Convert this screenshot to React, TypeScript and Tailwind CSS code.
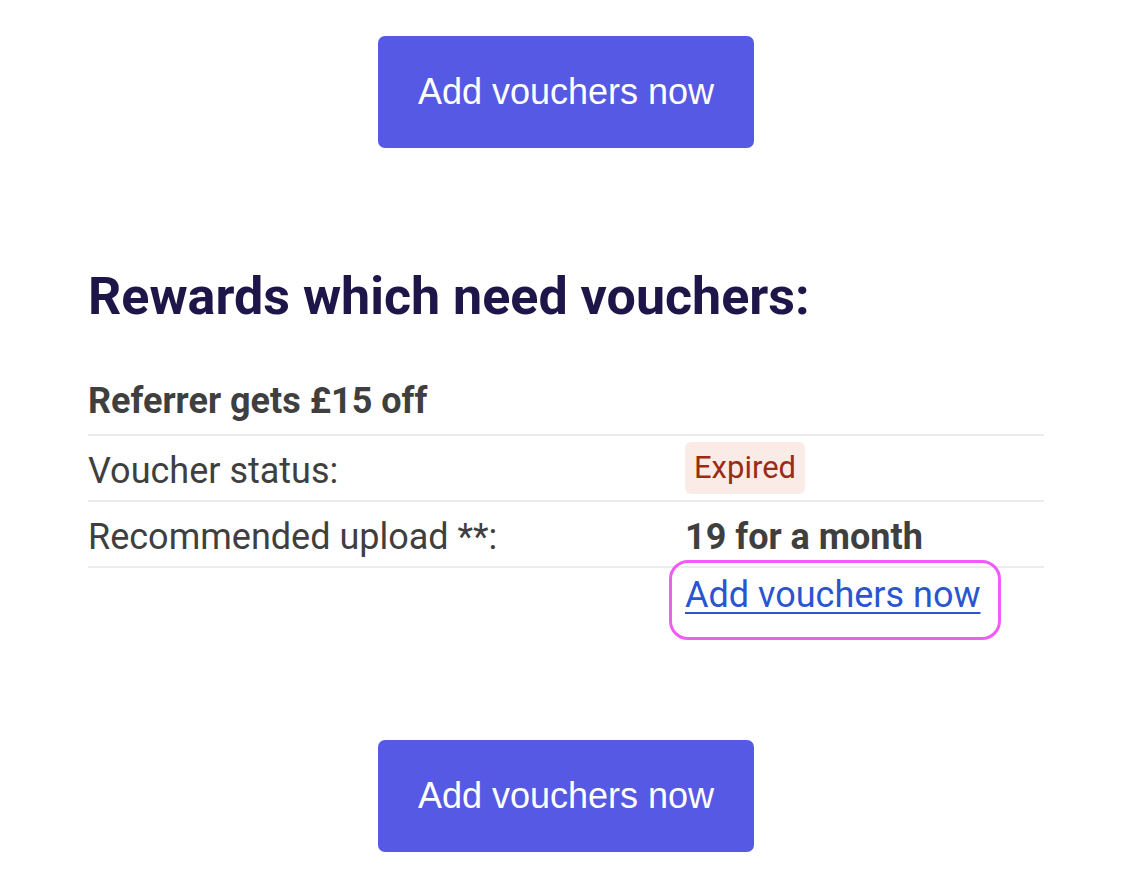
function VoucherButton() {
  return (
    <div className="flex justify-center">
      <button
        type="button"
        className="w-[376px] h-[112px] rounded-[7px] bg-[#5659e4] text-white text-[36px] font-['Liberation_Sans',Arial,sans-serif]"
      >
        Add vouchers now
      </button>
    </div>
  );
}

function Row({
  label,
  children,
  badge = false,
}: {
  label?: string;
  children: React.ReactNode;
  badge?: boolean;
}) {
  return (
    <div className="grid grid-cols-[597px_1fr] border-t-2 border-[#ececec] min-h-[66px] items-start">
      <div className="pt-[8px] leading-[1.5]">{label}</div>
      <div className={badge ? "pt-[6px] leading-none" : "pt-[8px] leading-[1.5]"}>{children}</div>
    </div>
  );
}

export default function App() {
  return (
    <div className="min-h-[896px] bg-white px-[88px] pt-[36px] text-[36px] text-[#3f3f3f] font-['Roboto',sans-serif]">
      <VoucherButton />

      <h2 className="mt-[118px] text-[52px] leading-[1.2] font-bold text-[#1e1648]">
        Rewards which need vouchers:
      </h2>

      <div className="mt-[46px]">
        <div className="font-bold leading-[1.5] pb-[6px]">Referrer gets £15 off</div>
        <Row label="Voucher status:" badge>
          <span className="inline-block rounded-[6px] bg-[#fbebe7] text-[#9a2b14] text-[31px] leading-[52px] px-[9px]">
            Expired
          </span>
        </Row>
        <Row label="Recommended upload **:">
          <span className="font-bold">19 for a month</span>
        </Row>
        <div className="grid grid-cols-[597px_1fr] border-t-2 border-[#ececec]">
          <div />
          <div>
            <a
              href="#"
              onClick={(e) => e.preventDefault()}
              className="inline-block -ml-[13px] -mt-[8px] pl-[13px] pr-[17px] pt-[5px] pb-[15px] leading-[1.5] rounded-[16px] outline-3 outline-[#f25cf6] text-[#2a55d1] underline decoration-2 underline-offset-[5px]"
            >
              Add vouchers now
            </a>
          </div>
        </div>
      </div>

      <div className="mt-[103px] pb-[44px]">
        <VoucherButton />
      </div>
    </div>
  );
}
